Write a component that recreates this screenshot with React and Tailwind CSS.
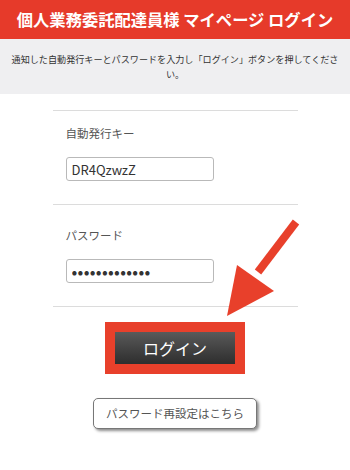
import React from 'react';

const font = { fontFamily: '"Noto Sans CJK JP", "Noto Sans", sans-serif' };

function Field({ label, value, top, dots }) {
  return (
    <div className={`border-t border-[#dcdcdc] pl-[13px] ${top}`}>
      <div className="text-[11.5px] leading-[16px] text-[#555]">{label}</div>
      <input
        type="text"
        defaultValue={value}
        readOnly
        className={`mt-[16px] block h-[24px] w-[148px] rounded-[3px] border border-[#b9b9b9] bg-white px-[5px] text-[#333] outline-none ${dots ? 'text-[17px] tracking-[0.3px]' : 'text-[13px]'}`}
        style={font}
      />
    </div>
  );
}

export default function App() {
  return (
    <div className="relative h-[470px] w-[350px] overflow-hidden bg-white" style={font}>
      <div className="flex h-[39px] items-center justify-center bg-[#e63a2a] text-[16.3px] font-bold text-white">
        個人業務委託配達員様 マイページ ログイン
      </div>
      <div className="flex h-[55px] items-center justify-center bg-[#efeff1] text-center text-[9.1px] leading-[15px] text-[#333]">
        <p className="whitespace-nowrap">
          通知した自動発行キーとパスワードを入力し「ログイン」ボタンを押してくださ
          <br />
          い。
        </p>
      </div>

      <div className="mx-auto mt-[16px] w-[245px]">
        <Field label="自動発行キー" value="DR4QzwzZ" top="pt-[14px] pb-[23px]" />
        <Field label="パスワード" value="•••••••••••••" dots top="pt-[22px] pb-[23px]" />
        <div className="border-t border-[#dcdcdc]" />
      </div>

      <div className="mt-[15px] flex justify-center">
        <div className="bg-[#e8402b] p-[10px]">
          <button className="flex h-[32px] w-[120px] items-center justify-center bg-gradient-to-b from-[#5a5a5a] to-[#2e2e2e] text-[16px] text-white">
            ログイン
          </button>
        </div>
      </div>

      <div className="mt-[24px] flex justify-center">
        <button className="flex h-[31px] w-[164px] items-center justify-center rounded-[5px] border border-[#777] bg-white text-[11.5px] text-[#555] shadow-[2px_2px_3px_rgba(0,0,0,0.45)]">
          パスワード再設定はこちら
        </button>
      </div>

      <svg className="pointer-events-none absolute left-0 top-0" width="350" height="470" viewBox="0 0 350 470">
        <line x1="296" y1="222" x2="258" y2="272" stroke="#e8402b" strokeWidth="8" />
        <polygon points="237,265 274,291 227,316" fill="#e8402b" />
      </svg>
    </div>
  );
}
